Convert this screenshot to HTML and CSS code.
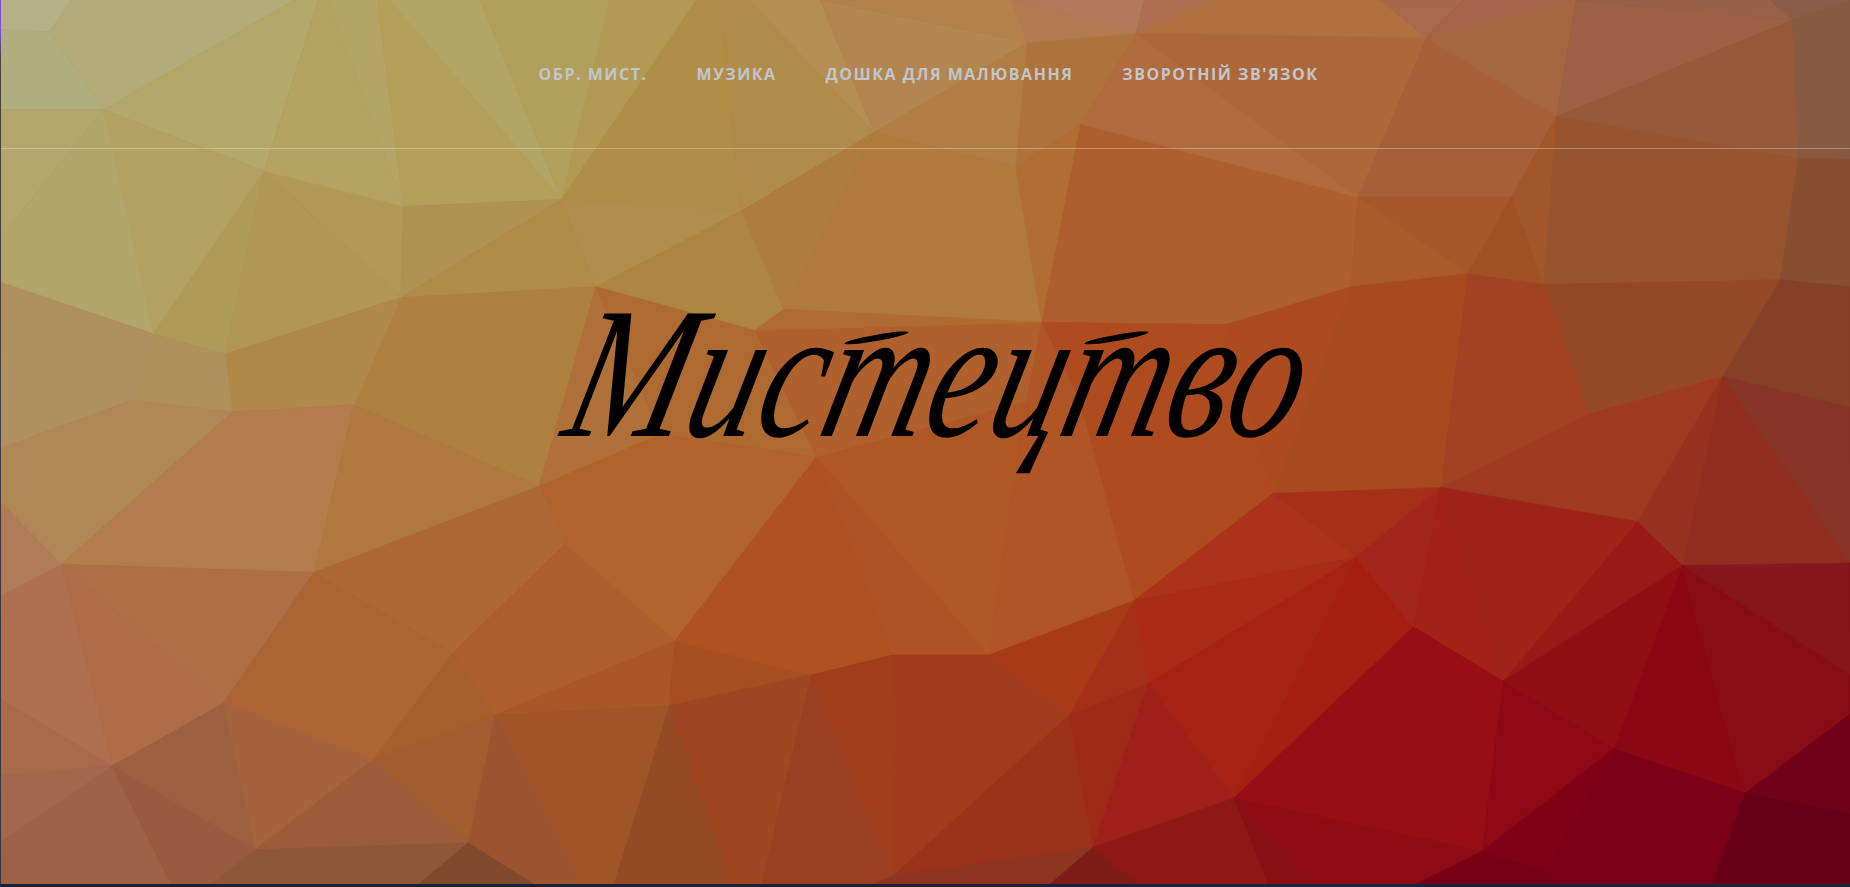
FILE: index.html
```html
<!DOCTYPE html>
<html lang="uk">
<head>
<meta charset="utf-8">
<title>Мистецтво</title>
<link rel="stylesheet" href="styles.css">
</head>
<body>
<div class="page">
  <section class="hero">
    <svg class="mesh" viewBox="0 0 1568 749" preserveAspectRatio="none" aria-hidden="true">
      <rect class="mesh-base" width="1568" height="749"/>
      <polygon color="#b4b088" points="0,0 60,0 42,27 0,25"/>
      <polygon color="#b2ad78" points="60,0 250,0 88,93 42,27"/>
      <polygon color="#b0ad7e" points="0,25 42,27 88,93 0,93"/>
      <polygon color="#b3a76a" points="250,0 270,0 224,145 88,93"/>
      <polygon color="#b3a66c" points="0,93 88,93 0,202"/>
      <polygon color="#b2a162" points="88,93 224,145 130,283"/>
      <polygon color="#b1a569" points="0,202 88,93 130,283 0,239"/>
      <polygon color="#b09a5a" points="224,145 191,300 130,283"/>
      <polygon color="#b19856" points="224,145 342,175 340,252"/>
      <polygon color="#b09757" points="224,145 340,252 191,300"/>
      <polygon color="#b3a262" points="270,0 278,0 342,175 224,145"/>
      <polygon color="#b3a465" points="278,0 320,0 342,175"/>
      <polygon color="#b2a059" points="320,0 330,0 476,169 342,175"/>
      <polygon color="#b2a464" points="330,0 407,0 476,169"/>
      <polygon color="#b1a05c" points="407,0 517,0 476,169"/>
      <polygon color="#b29a55" points="517,0 590,0 476,169"/>
      <polygon color="#b08e47" points="590,0 610,0 628,179 476,169"/>
      <polygon color="#b08c4a" points="610,0 635,0 741,112 628,179"/>
      <polygon color="#b48e54" points="635,0 695,0 741,112"/>
      <polygon color="#b38550" points="695,0 871,36 741,112"/>
      <polygon color="#b3804c" points="695,0 857,0 871,36"/>
      <polygon color="#b17d44" points="741,112 871,36 861,141"/>
      <polygon color="#ae733d" points="871,36 963,28 916,105 861,141"/>
      <polygon color="#b27a52" points="857,0 963,28 871,36"/>
      <polygon color="#b2785a" points="857,0 970,0 963,28"/>
      <polygon color="#ac7050" points="970,0 1030,0 963,28"/>
      <polygon color="#ae7c3c" points="628,179 741,112 664,262"/>
      <polygon color="#b07a3c" points="741,112 861,141 883,273 664,262"/>
      <polygon color="#b08f4e" points="476,169 628,179 505,243"/>
      <polygon color="#b09254" points="342,175 476,169 340,252"/>
      <polygon color="#af8c47" points="476,169 505,243 340,252"/>
      <polygon color="#ae8540" points="628,179 664,262 640,280 505,243"/>
      <polygon color="#ae8040" points="340,252 505,243 457,412 300,343"/>
      <polygon color="#b0884a" points="191,300 340,252 300,343 197,349"/>
      <polygon color="#b0905c" points="130,283 191,300 197,349 112,339"/>
      <polygon color="#b09060" points="0,239 130,283 112,339 0,380"/>
      <polygon color="#b08858" points="0,380 112,339 197,349 52,478 0,425"/>
      <polygon color="#b27c4c" points="197,349 300,343 266,485 52,478"/>
      <polygon color="#ae783e" points="300,343 457,412 266,485"/>
      <polygon color="#b0703a" points="457,412 505,243 560,368"/>
      <polygon color="#ae6a30" points="505,243 640,280 692,387 560,368"/>
      <polygon color="#b0642c" points="560,368 692,387 572,543 479,461 457,412"/>
      <polygon color="#ae6836" points="457,412 479,461 384,553 266,485"/>
      <polygon color="#ae6e46" points="52,478 266,485 189,596"/>
      <polygon color="#ae6c48" points="52,478 189,596 95,649"/>
      <polygon color="#ae7050" points="0,505 52,478 95,649 0,592"/>
      <polygon color="#b07c58" points="0,425 52,478 0,505"/>
      <polygon color="#ac6434" points="266,485 384,553 316,644 189,596"/>
      <polygon color="#a65e2c" points="384,553 419,606 316,644"/>
      <polygon color="#ac5e2c" points="384,553 479,461 572,543 419,606"/>
      <polygon color="#a95726" points="419,606 572,543 567,598"/>
      <polygon color="#a84f22" points="572,543 687,572 567,598"/>
      <polygon color="#ae5222" points="572,543 692,387 756,555 687,572"/>
      <polygon color="#ae5424" points="692,387 838,555 756,555"/>
      <polygon color="#af5826" points="692,387 870,340 838,555"/>
      <polygon color="#b0602c" points="640,280 883,273 870,340 692,387"/>
      <polygon color="#b06c30" points="664,262 883,273 640,280"/>
      <polygon color="#b06e34" points="861,141 916,105 883,273"/>
      <polygon color="#ae5f30" points="916,105 1151,167 1145,243 1039,275 883,273"/>
      <polygon color="#b06c3e" points="916,105 963,28 1151,167"/>
      <polygon color="#ac683a" points="963,28 1209,32 1151,167"/>
      <polygon color="#b0703f" points="1030,0 1170,0 1209,32 963,28"/>
      <polygon color="#a8684c" points="1170,0 1240,0 1209,32"/>
      <polygon color="#a4634a" points="1240,0 1336,0 1209,32"/>
      <polygon color="#a65f38" points="1209,32 1319,99 1281,167 1151,167"/>
      <polygon color="#a36640" points="1209,32 1336,0 1319,99"/>
      <polygon color="#9c6046" points="1336,0 1519,17 1319,99"/>
      <polygon color="#965a3a" points="1519,17 1524,134 1319,99"/>
      <polygon color="#986048" points="1336,0 1520,0 1519,17"/>
      <polygon color="#8c5c4a" points="1500,0 1568,0 1519,17"/>
      <polygon color="#885a42" points="1519,17 1568,0 1568,135 1524,134"/>
      <polygon color="#96552e" points="1319,99 1524,134 1509,237 1308,241"/>
      <polygon color="#a2562c" points="1319,99 1281,167 1308,241"/>
      <polygon color="#885030" points="1524,134 1568,135 1568,243 1509,237"/>
      <polygon color="#a5582c" points="1151,167 1281,167 1244,232"/>
      <polygon color="#a05226" points="1281,167 1308,241 1244,232"/>
      <polygon color="#aa5a2c" points="1151,167 1244,232 1145,243"/>
      <polygon color="#954825" points="1308,241 1509,237 1460,319 1346,351"/>
      <polygon color="#854028" points="1509,237 1568,243 1568,345 1460,319"/>
      <polygon color="#873528" points="1460,319 1568,345 1568,477"/>
      <polygon color="#922e20" points="1460,319 1568,477 1426,479"/>
      <polygon color="#a84a20" points="1145,243 1244,232 1221,413 1079,418"/>
      <polygon color="#a24222" points="1244,232 1308,241 1346,351 1221,413"/>
      <polygon color="#9e3a20" points="1346,351 1460,319 1388,442 1221,413"/>
      <polygon color="#96321f" points="1460,319 1426,479 1388,442"/>
      <polygon color="#ac4a20" points="1039,275 1145,243 1079,418"/>
      <polygon color="#ae4c20" points="883,273 1039,275 1079,418 961,509 915,340"/>
      <polygon color="#b05526" points="883,273 915,340 961,509 838,555 870,340"/>
      <polygon color="#aa331a" points="961,509 1079,418 1149,472"/>
      <polygon color="#a62f1a" points="1079,418 1221,413 1149,472"/>
      <polygon color="#aa2c16" points="961,509 1149,472 973,579"/>
      <polygon color="#a83a18" points="838,555 961,509 906,606"/>
      <polygon color="#a5301a" points="961,509 973,579 906,606"/>
      <polygon color="#a61e12" points="1149,472 1198,531 1046,676"/>
      <polygon color="#a62214" points="973,579 1149,472 1046,676"/>
      <polygon color="#9e2a18" points="906,606 973,579 926,718"/>
      <polygon color="#9e2018" points="973,579 1046,676 926,718"/>
      <polygon color="#a3261a" points="1149,472 1221,413 1198,531"/>
      <polygon color="#a22215" points="1221,413 1274,577 1198,531"/>
      <polygon color="#9e2418" points="1221,413 1388,442 1274,577"/>
      <polygon color="#971a18" points="1388,442 1426,479 1274,577"/>
      <polygon color="#8f1014" points="1274,577 1426,479 1368,634"/>
      <polygon color="#8a0814" points="1426,479 1479,672 1368,634"/>
      <polygon color="#86161c" points="1426,479 1568,477 1568,572"/>
      <polygon color="#880c16" points="1426,479 1568,572 1568,605 1479,672"/>
      <polygon color="#720018" points="1479,672 1568,605 1568,689"/>
      <polygon color="#980e14" points="1198,531 1274,577 1256,721 1046,676"/>
      <polygon color="#8e0815" points="1274,577 1368,634 1256,721"/>
      <polygon color="#800016" points="1368,634 1309,737 1256,721"/>
      <polygon color="#7c0018" points="1368,634 1479,672 1451,749 1330,749 1309,737"/>
      <polygon color="#650018" points="1479,672 1568,689 1568,749 1451,749"/>
      <polygon color="#8e0c14" points="1046,676 1256,721 1200,749 1110,749"/>
      <polygon color="#8e1816" points="926,718 1046,676 1075,749 965,749"/>
      <polygon color="#861014" points="1046,676 1110,749 1075,749"/>
      <polygon color="#780014" points="1256,721 1309,737 1330,749 1200,749"/>
      <polygon color="#a23a1c" points="756,555 838,555 906,606 757,742"/>
      <polygon color="#9c3219" points="906,606 926,718 757,742"/>
      <polygon color="#a03e1c" points="756,555 757,742 687,572"/>
      <polygon color="#9a3f22" points="687,572 757,742 740,749 645,749"/>
      <polygon color="#a04622" points="567,598 687,572 645,749 620,749"/>
      <polygon color="#964a26" points="567,598 620,749 520,749"/>
      <polygon color="#a05428" points="419,606 567,598 520,749 490,749"/>
      <polygon color="#9c5430" points="419,606 397,714 452,749 490,749"/>
      <polygon color="#a25c30" points="316,644 419,606 397,714"/>
      <polygon color="#a4623e" points="189,596 316,644 216,720"/>
      <polygon color="#9c6040" points="95,649 189,596 216,720"/>
      <polygon color="#9c5c3a" points="216,720 316,644 397,714"/>
      <polygon color="#a96a4c" points="0,592 95,649 0,657"/>
      <polygon color="#a2684e" points="0,657 95,649 0,714"/>
      <polygon color="#9c6248" points="0,714 95,649 145,749 0,749"/>
      <polygon color="#985a40" points="95,649 216,720 180,749 145,749"/>
      <polygon color="#8e5838" points="216,720 397,714 355,749 180,749"/>
      <polygon color="#80492e" points="397,714 452,749 355,749"/>
      <polygon color="#8d3520" points="757,742 926,718 890,749 740,749"/>
      <polygon color="#7e1c18" points="926,718 965,749 890,749"/>
    </svg>
    <header class="topbar">
      <nav class="menu">
        <a class="menu-link" href="#">Обр. мист.</a>
        <a class="menu-link" href="#">Музика</a>
        <a class="menu-link" href="#">Дошка для малювання</a>
        <a class="menu-link" href="#">Зворотній зв'язок</a>
      </nav>
    </header>
    <main class="banner">
      <h1 class="title">Мис<span class="tee">т</span>ец<span class="tee">т</span>во</h1>
    </main>
  </section>
</div>
</body>
</html>
```
FILE: styles.css
```css
* { box-sizing: border-box; }
html, body { height: 100%; margin: 0; }
body { background: #1b2238; overflow: hidden; }
.page { height: 100vh; padding-bottom: 3px; }
.hero {
  position: relative;
  height: 100%;
  display: flex;
  flex-direction: column;
  overflow: hidden;
}
.hero::before {
  content: "";
  position: absolute;
  left: 0;
  top: 0;
  bottom: 0;
  width: 1px;
  z-index: 1;
  background: linear-gradient(#7a4fe0 0, #7a4fe0 30px, #4a4038 60px, #3a3440 100%);
}
.mesh { position: absolute; inset: 0; width: 100%; height: 100%; display: block; }
.mesh-base { fill: #a8602c; }
.mesh polygon { fill: currentColor; stroke: currentColor; stroke-width: .5; }
.topbar {
  position: relative;
  height: 149px;
  flex: none;
  display: flex;
  justify-content: center;
  align-items: center;
  border-bottom: 1px solid rgba(255, 255, 255, .3);
}
.menu { display: flex; gap: 49px; margin-left: 7px; }
.menu-link {
  font: 700 16px/20px "Open Sans", sans-serif;
  letter-spacing: 1.5px;
  text-transform: uppercase;
  text-decoration: none;
  color: #c2c6ca;
}
.banner {
  position: relative;
  flex: 1;
  display: flex;
  justify-content: center;
  align-items: flex-start;
  padding-top: 139px;
}
.title {
  margin: 0;
  font: italic 400 144px/200px "Liberation Serif", serif;
  color: #000;
  transform: skewX(-14deg) scaleY(1.3);
  transform-origin: 50% 74%;
}
.tee { position: relative; }
.tee::before {
  content: "";
  position: absolute;
  left: 6%;
  top: 50px;
  width: 62px;
  height: 5px;
  border-radius: 50%;
  background: #000;
  transform: rotate(-8deg);
}
```
